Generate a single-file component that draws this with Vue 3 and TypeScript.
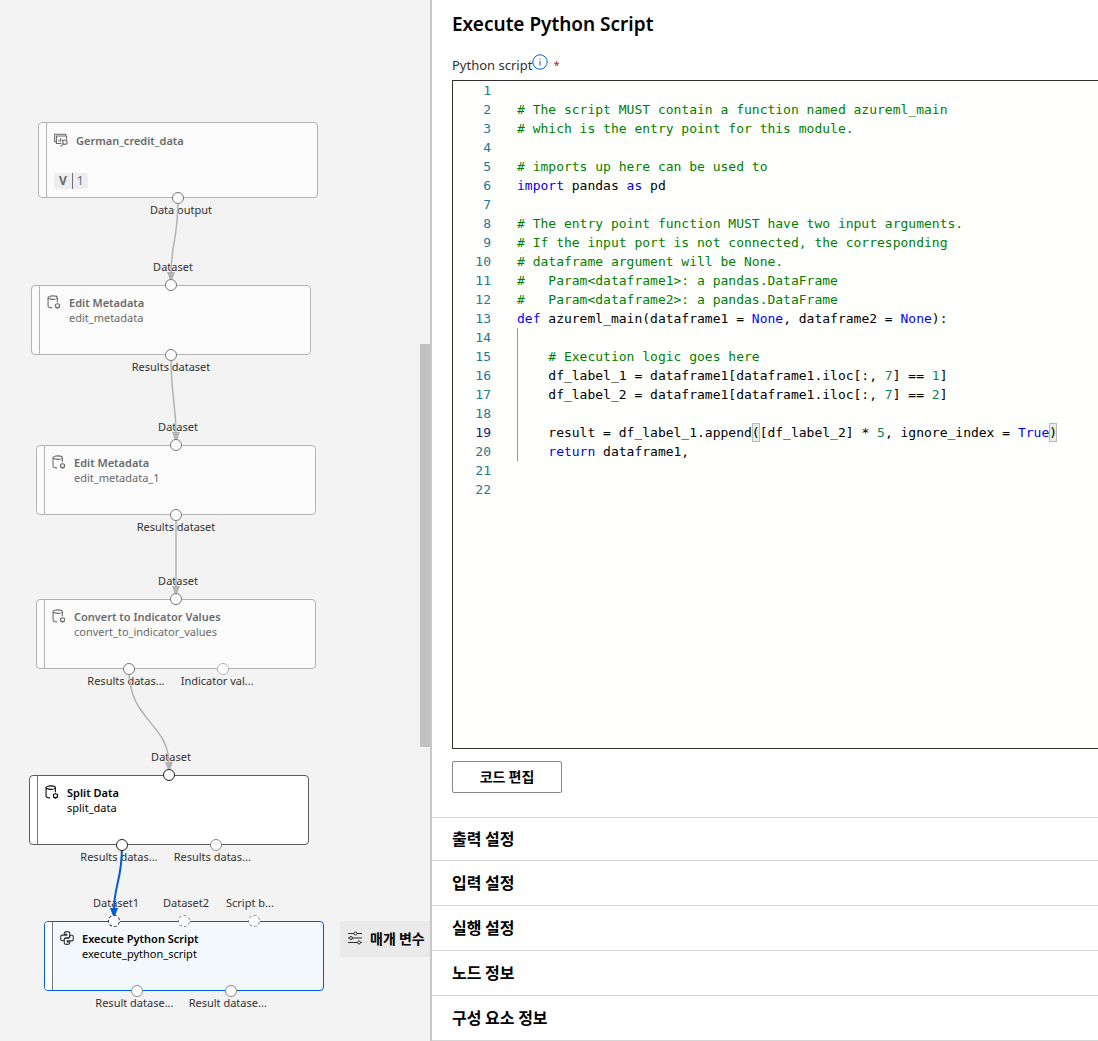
<script setup lang="ts">
type IconName = 'data' | 'module' | 'python'
type Tone = 'muted' | 'normal' | 'selected'

interface Port {
  label: string
  clipped?: boolean
  linked?: boolean
}

interface GraphNode {
  id: string
  x: number
  y: number
  title: string
  name?: string
  version?: string
  icon: IconName
  tone: Tone
  inputs: Port[]
  outputs: Port[]
}

interface Token {
  text: string
  kind?: 'comment' | 'keyword' | 'number' | 'bracket'
}

const nodes: GraphNode[] = [
  {
    id: 'data', x: 38, y: 122, title: 'German_credit_data', version: '1', icon: 'data', tone: 'muted',
    inputs: [],
    outputs: [{ label: 'Data output', linked: true }],
  },
  {
    id: 'edit', x: 31, y: 285, title: 'Edit Metadata', name: 'edit_metadata', icon: 'module', tone: 'muted',
    inputs: [{ label: 'Dataset', linked: true }],
    outputs: [{ label: 'Results dataset', linked: true }],
  },
  {
    id: 'edit1', x: 36, y: 445, title: 'Edit Metadata', name: 'edit_metadata_1', icon: 'module', tone: 'muted',
    inputs: [{ label: 'Dataset', linked: true }],
    outputs: [{ label: 'Results dataset', linked: true }],
  },
  {
    id: 'convert', x: 36, y: 599, title: 'Convert to Indicator Values', name: 'convert_to_indicator_values', icon: 'module', tone: 'muted',
    inputs: [{ label: 'Dataset', linked: true }],
    outputs: [{ label: 'Results datas...', clipped: true, linked: true }, { label: 'Indicator val...', clipped: true }],
  },
  {
    id: 'split', x: 29, y: 775, title: 'Split Data', name: 'split_data', icon: 'module', tone: 'normal',
    inputs: [{ label: 'Dataset', linked: true }],
    outputs: [{ label: 'Results datas...', clipped: true, linked: true }, { label: 'Results datas...', clipped: true }],
  },
  {
    id: 'python', x: 44, y: 921, title: 'Execute Python Script', name: 'execute_python_script', icon: 'python', tone: 'selected',
    inputs: [{ label: 'Dataset1', linked: true }, { label: 'Dataset2' }, { label: 'Script b...', clipped: true }],
    outputs: [{ label: 'Result datase...', clipped: true }, { label: 'Result datase...', clipped: true }],
  },
]

const edges = [
  { from: [178, 198], to: [171, 285], active: false },
  { from: [171, 355], to: [176, 445], active: false },
  { from: [176, 515], to: [176, 599], active: false },
  { from: [129, 669], to: [169, 775], active: false },
  { from: [122, 845], to: [114, 921], active: true },
]

function edgePath(from: number[], to: number[]): string {
  const end = to[1] - 10
  const mid = (from[1] + to[1]) / 2
  return `M${from[0]} ${from[1]}C${from[0]} ${mid} ${to[0]} ${mid} ${to[0]} ${end}`
}

function arrowPath(to: number[]): string {
  return `M${to[0] - 4} ${to[1] - 13}h8l-3 8h-2z`
}

const c = (text: string): Token => ({ text, kind: 'comment' })
const k = (text: string): Token => ({ text, kind: 'keyword' })
const n = (text: string): Token => ({ text, kind: 'number' })
const b = (text: string): Token => ({ text, kind: 'bracket' })
const t = (text: string): Token => ({ text })

const currentLine = 19
const lines: Token[][] = [
  [],
  [c('# The script MUST contain a function named azureml_main')],
  [c('# which is the entry point for this module.')],
  [],
  [c('# imports up here can be used to')],
  [k('import'), t(' pandas '), k('as'), t(' pd')],
  [],
  [c('# The entry point function MUST have two input arguments.')],
  [c('# If the input port is not connected, the corresponding')],
  [c('# dataframe argument will be None.')],
  [c('#   Param<dataframe1>: a pandas.DataFrame')],
  [c('#   Param<dataframe2>: a pandas.DataFrame')],
  [k('def'), t(' azureml_main(dataframe1 = '), k('None'), t(', dataframe2 = '), k('None'), t('):')],
  [],
  [t('    '), c('# Execution logic goes here')],
  [t('    df_label_1 = dataframe1[dataframe1.iloc[:, '), n('7'), t('] == '), n('1'), t(']')],
  [t('    df_label_2 = dataframe1[dataframe1.iloc[:, '), n('7'), t('] == '), n('2'), t(']')],
  [],
  [t('    result = df_label_1.append'), b('('), t('[df_label_2] * '), n('5'), t(', ignore_index = '), k('True'), b(')')],
  [t('    '), k('return'), t(' dataframe1,')],
  [],
  [],
]

const isIndented = (line: number) => line >= 14 && line <= 20

const sections = ['출력 설정', '입력 설정', '실행 설정', '노드 정보', '구성 요소 정보']
</script>

<template>
  <div class="designer">
    <main class="canvas">
      <article
        v-for="node in nodes"
        :key="node.id"
        class="node"
        :class="[node.tone, { tall: node.version }]"
        :style="{ left: node.x + 'px', top: node.y + 'px' }"
      >
        <div class="ports inputs">
          <div v-for="(port, i) in node.inputs" :key="i" class="port">
            <span class="dot" :class="{ linked: port.linked, dashed: node.tone === 'selected' }"></span>
            <span class="port-label" :class="{ clipped: port.clipped }">{{ port.label }}</span>
          </div>
        </div>
        <div class="stripe"></div>
        <div class="body">
          <svg v-if="node.icon === 'module'" class="icon" viewBox="0 0 16 16">
            <ellipse cx="6.5" cy="3" rx="5.3" ry="2" />
            <path d="M1.2 3v9.6c0 1.3 2 2.1 4.6 2.1M11.8 3v5" />
            <circle cx="12" cy="12.2" r="2.3" />
            <path d="M12 8.8v1M12 14.6v1M9.1 10.5l.9.5M14 13.4l.9.5M9.1 13.9l.9-.5M14 11l.9-.5" />
          </svg>
          <svg v-else-if="node.icon === 'python'" class="icon python-icon" viewBox="0 0 16 16">
            <path d="M8.3 3.6H4.9V2.3C4.9 1.3 6.2.7 8 .7s3.1.6 3.1 1.6v3.5c0 1.2-.8 1.9-1.9 1.9H6.6c-1.2 0-1.9.9-1.9 2v1.5H2.6C1.4 11.2.7 9.8.7 8s.6-3.3 1.9-3.3h5.7" />
            <path d="M7.7 12.4h3.4v1.3c0 1-1.3 1.6-3.1 1.6s-3.100-.6-3.100-1.600v-3.500c0-1.200.8-1.900 1.900-1.900h2.600c1.200 0 1.900-.9 1.900-2V4.800h2.100c1.200 0 1.900 1.400 1.900 3.200s-.6 3.300-1.900 3.300H7.700" />
            <path d="M6.7 2.2h.5M8.8 13.8h.5" />
          </svg>
          <svg v-else class="icon" viewBox="0 0 16 16">
            <path d="M2.500 10H.8V1.500h12.400v1.500" />
            <path d="M8.500 12H2.800V3.500h11.500v4" />
            <path d="M5.500 10V8M7.500 10V6M9.500 9V7" />
            <circle cx="12.500" cy="10.500" r="2.500" />
            <path d="M10.800 12.300l-3.300 3.200" />
          </svg>
          <div class="caption">
            <h2>{{ node.title }}</h2>
            <p v-if="node.name">{{ node.name }}</p>
          </div>
          <div v-if="node.version" class="version"><b>V</b><span>{{ node.version }}</span></div>
        </div>
        <div class="ports outputs">
          <div v-for="(port, i) in node.outputs" :key="i" class="port">
            <span class="dot" :class="{ linked: port.linked }"></span>
            <span class="port-label" :class="{ clipped: port.clipped }">{{ port.label }}</span>
          </div>
        </div>
      </article>

      <svg class="edges">
        <g v-for="(edge, i) in edges" :key="i" :class="{ active: edge.active }">
          <path class="wire" :d="edgePath(edge.from, edge.to)" />
          <path class="arrow" :d="arrowPath(edge.to)" />
        </g>
      </svg>

      <button type="button" class="params">
        <svg viewBox="0 0 16 16">
          <path d="M1 3.500h6M10 3.500h5M1 8h1.500M5.500 8H15M1 12.500h9.500M13.500 12.500H15" />
          <circle cx="8.500" cy="3.500" r="1.500" />
          <circle cx="4" cy="8" r="1.500" />
          <circle cx="12" cy="12.500" r="1.500" />
        </svg>
        <span>매개 변수</span>
      </button>
      <div class="scroll-thumb"></div>
    </main>

    <aside class="panel">
      <h1>Execute Python Script</h1>
      <div class="field-label">
        <span id="script-label">Python script</span>
        <svg viewBox="0 0 16 16">
          <circle cx="8" cy="8" r="7.2" />
          <path d="M8 7v4.500M8 4.500v1.200" />
        </svg>
        <span class="required">*</span>
      </div>
      <div class="editor" role="region" aria-labelledby="script-label">
        <div v-for="(line, i) in lines" :key="i" class="line">
          <span class="line-no" :class="{ current: i + 1 === currentLine }">{{ i + 1 }}</span>
          <code :class="{ guide: isIndented(i + 1) }"><span v-for="(token, j) in line" :key="j" :class="token.kind">{{ token.text }}</span></code>
        </div>
      </div>
      <button type="button" class="edit">코드 편집</button>
      <div class="sections">
        <button v-for="section in sections" :key="section" type="button" class="section">{{ section }}</button>
      </div>
    </aside>
  </div>
</template>

<style>
body {
  margin: 0;
}
</style>

<style scoped>
.designer {
  display: flex;
  min-height: 100vh;
  font-family: "Noto Sans", "Noto Sans CJK KR", sans-serif;
  color: #000;
  background: #fff;
}

h1,
h2,
p {
  margin: 0;
}

button {
  font-family: "Noto Sans CJK KR", sans-serif;
  font-weight: 700;
  color: #000;
  cursor: pointer;
}

.canvas {
  position: relative;
  flex: 0 0 430px;
  overflow: hidden;
  background: #f3f3f3;
}

.node {
  position: absolute;
  display: flex;
  box-sizing: border-box;
  width: 280px;
  height: 70px;
  border: 1px solid #b3b3b3;
  border-radius: 4px;
  background: #fbfbfb;
  color: #6a6a6a;
}

.node.tall {
  height: 76px;
}

.node.normal {
  border-color: #5c5c5c;
  background: #fff;
  color: #000;
}

.node.selected {
  border-color: #015cda;
  background: #f3f8fd;
  color: #000;
}

.stripe {
  flex: 0 0 7px;
  border-right: 1px solid #b3b3b3;
}

.normal .stripe,
.selected .stripe {
  border-color: #777;
}

.selected .stripe {
  border-radius: 3px 0 0 3px;
  background: #fff;
}

.body {
  display: grid;
  flex: 1;
  grid-template-columns: 14px 1fr;
  grid-template-rows: auto 1fr;
  column-gap: 8px;
  padding: 9px 7px 8px;
}

.icon {
  width: 14px;
  height: 14px;
  overflow: visible;
  fill: none;
  stroke: currentColor;
  stroke-width: 1.2;
}

.python-icon {
  stroke: #323130;
}

.caption,
.caption h2 {
  font-size: 11px;
  line-height: 15px;
}

.caption h2 {
  font-weight: 600;
}

.tall .icon,
.tall .caption {
  margin-top: 1px;
}

.version {
  display: flex;
  grid-column: 1 / 3;
  align-self: end;
  justify-self: start;
  border-radius: 3px;
  background: #ededed;
  font-size: 12px;
  line-height: 16px;
}

.version b {
  padding: 0 5px;
  border-right: 1px solid #707070;
}

.version span {
  padding: 0 4px;
}

.ports {
  position: absolute;
  left: -1px;
  right: -1px;
  display: flex;
  justify-content: space-evenly;
}

.inputs {
  top: -1px;
}

.outputs {
  bottom: -1px;
}

.port {
  position: relative;
  display: flex;
  justify-content: center;
  width: 0;
}

.dot {
  position: absolute;
  z-index: 2;
  top: -6px;
  left: -6px;
  box-sizing: border-box;
  width: 12px;
  height: 12px;
  border: 1px solid #b3b3b3;
  border-radius: 50%;
  background: #fff;
}

.dot.linked {
  border-color: #777;
}

.normal .dot,
.selected .dot {
  border-color: #8a8a8a;
}

.normal .dot.linked,
.selected .dot.linked {
  border-color: #222;
}

.selected .dot.dashed {
  border-style: dashed;
}

.port-label {
  position: absolute;
  color: #323130;
  font-size: 11px;
  line-height: 16px;
  white-space: nowrap;
}

.inputs .port-label {
  bottom: 10px;
  padding-left: 4px;
}

.outputs .port-label {
  top: 4px;
}

.tall .port-label {
  padding-left: 6px;
}

.inputs .clipped {
  width: 60px;
}

.outputs .clipped {
  width: 84px;
}

.edges {
  position: absolute;
  z-index: 1;
  inset: 0;
  width: 100%;
  height: 100%;
  pointer-events: none;
}

.wire {
  fill: none;
  stroke: #b3b3b3;
  stroke-width: 1.5;
}

.arrow {
  fill: #b3b3b3;
}

.active .wire {
  stroke: #015cda;
  stroke-width: 2;
}

.active .arrow {
  fill: #015cda;
}

.params {
  position: absolute;
  top: 921px;
  right: 0;
  display: flex;
  align-items: center;
  gap: 7px;
  width: 90px;
  height: 36px;
  padding: 0 0 2px 7px;
  border: 0;
  background: #eaeaea;
  font-size: 14px;
  line-height: 20px;
  white-space: nowrap;
}

.params svg {
  flex: 0 0 16px;
  height: 16px;
  fill: none;
  stroke: #323130;
}

.scroll-thumb {
  position: absolute;
  z-index: 3;
  top: 344px;
  right: 0;
  width: 10px;
  height: 403px;
  background: #c1c1c1;
}

.panel {
  display: flex;
  flex: 1;
  flex-direction: column;
  min-width: 0;
  border-left: 2px solid #c8c8c8;
}

h1 {
  margin: 10px 0 0 20px;
  font-size: 19px;
  line-height: 28px;
  font-weight: 600;
}

.field-label {
  display: flex;
  height: 28px;
  margin: 14px 0 0 20px;
  font-size: 13px;
  line-height: 26px;
  color: #323130;
}

.field-label svg {
  width: 16px;
  height: 16px;
  margin-top: 2px;
  fill: none;
  stroke: #015cda;
}

.required {
  margin-left: 5px;
  font-size: 11px;
  color: #a4262c;
}

.editor {
  flex: 1;
  margin-left: 20px;
  overflow: hidden;
  border: 1px solid #323130;
  border-right: 0;
  background: #fffffe;
  font-family: "DejaVu Sans Mono", monospace;
  font-size: 13px;
  line-height: 19px;
}

.line {
  display: flex;
  height: 19px;
}

.line-no {
  flex: 0 0 38px;
  color: #237893;
  text-align: right;
}

.line-no.current {
  color: #0b216f;
}

.line code {
  flex: 1;
  margin-left: 26px;
  font-family: inherit;
  white-space: pre;
}

.line .guide {
  box-shadow: inset 1px 0 #939393;
}

.comment {
  color: #008000;
}

.keyword {
  color: #0000ff;
}

.number {
  color: #098658;
}

.bracket {
  display: inline-block;
  height: 19px;
  background: #e5efe5;
  outline: 1px solid #b9b9b9;
  outline-offset: -1px;
}

.edit {
  align-self: flex-start;
  width: 110px;
  height: 32px;
  margin: 12px 0 24px 20px;
  padding: 0 0 2px;
  border: 1px solid #8a8886;
  border-radius: 2px;
  background: #fff;
  font-size: 14px;
}

.sections {
  display: flex;
  flex-direction: column;
  border-bottom: 1px solid #d6d6d6;
}

.section {
  height: 45px;
  padding: 0 20px 2px;
  border: 0;
  border-top: 1px solid #d6d6d6;
  background: none;
  font-size: 16px;
  line-height: 24px;
  text-align: left;
}

.section:first-child {
  height: 43px;
}
</style>
